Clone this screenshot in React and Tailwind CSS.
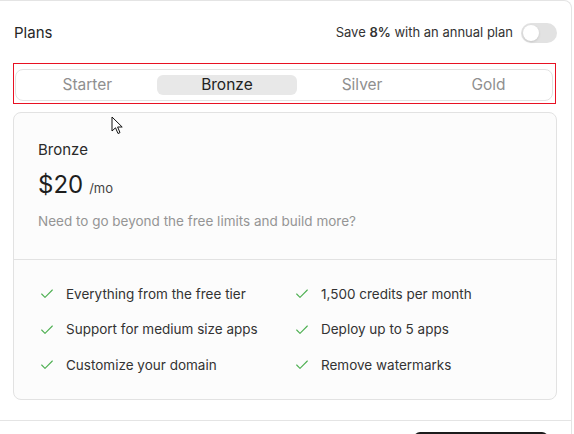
import { Check } from "lucide-react";

const tabs = ["Starter", "Bronze", "Silver", "Gold"];

const features = [
  "Everything from the free tier",
  "1,500 credits per month",
  "Support for medium size apps",
  "Deploy up to 5 apps",
  "Customize your domain",
  "Remove watermarks",
];

export default function App() {
  return (
    <div className="relative h-[434px] w-[574px] overflow-hidden bg-white font-['Inter',sans-serif] text-[#262626]">
      <div className="w-[572px] rounded-tr-lg border border-l-0 border-[#e4e4e4]">
        <div className="px-[13px] pt-[22px]">
          <div className="flex h-[20px] w-[544px] items-center justify-between">
            <span className="pl-px text-[15px]">Plans</span>
            <div className="flex items-center gap-2">
              <span className="text-[13px] text-[#333]">
                Save <span className="font-semibold">8%</span> with an annual plan
              </span>
              <div className="flex h-[20px] w-[36px] items-center rounded-full bg-[#e2e2e2] px-[2px]">
                <div className="h-[16px] w-[16px] rounded-full bg-white shadow-sm" />
              </div>
            </div>
          </div>

          <div className="mt-[20px] w-[543px] border border-[#e81123] pb-[2px] pl-px pr-[2px] pt-[5px]">
            <div className="flex rounded-lg border border-[#e2e2e2] px-[2px] py-[5px]">
              {tabs.map((t) => (
                <div
                  key={t}
                  className={
                    t === "Bronze"
                      ? "flex h-[20px] flex-auto items-center justify-center rounded-md bg-[#e8e8e8] text-[15.5px] text-[#222]"
                      : "flex h-[20px] flex-auto items-center justify-center text-[15.5px] text-[#8f8f8f]"
                  }
                >
                  {t}
                </div>
              ))}
            </div>
          </div>

          <div className="mt-[8px] w-[544px] rounded-lg border border-[#e2e2e2] bg-[#fcfcfc]">
            <div className="border-b border-[#e2e2e2] px-[24px] pb-[28px] pt-[27px]">
              <div className="text-[15px] leading-[20px] text-[#2a2a2a]">Bronze</div>
              <div className="mt-[9px] flex items-baseline gap-[6px] leading-[32px]">
                <span className="text-[24px] text-[#1e1e1e]">$20</span>
                <span className="text-[13px] text-[#444]">/mo</span>
              </div>
              <div className="mt-[7px] text-[13.5px] leading-[20px] text-[#959595]">
                Need to go beyond the free limits and build more?
              </div>
            </div>
            <div className="grid grid-cols-[255px_1fr] gap-y-[15.5px] px-[25px] pb-[24px] pt-[24px]">
              {features.map((f) => (
                <div key={f} className="flex h-[20px] items-center gap-[11px] text-[13.5px] text-[#333]">
                  <Check size={16} strokeWidth={1.6} className="text-[#4caf50]" />
                  <span>{f}</span>
                </div>
              ))}
            </div>
          </div>
        </div>

        <div className="mt-[20px] flex justify-end border-t border-[#e4e4e4] px-[23px] pt-[11px]">
          <div className="h-[36px] w-[134px] rounded-md bg-[#1c1c1c]" />
        </div>
      </div>

      <svg
        className="absolute left-[111px] top-[116px]"
        width="13"
        height="20"
        viewBox="0 0 13 20"
      >
        <path
          d="M1 1 L1 15 L4.5 11.8 L7 17.5 L9 16.6 L6.6 11 L11.2 11 Z"
          fill="white"
          stroke="#111"
          strokeWidth="1"
          strokeLinejoin="round"
        />
      </svg>
    </div>
  );
}
